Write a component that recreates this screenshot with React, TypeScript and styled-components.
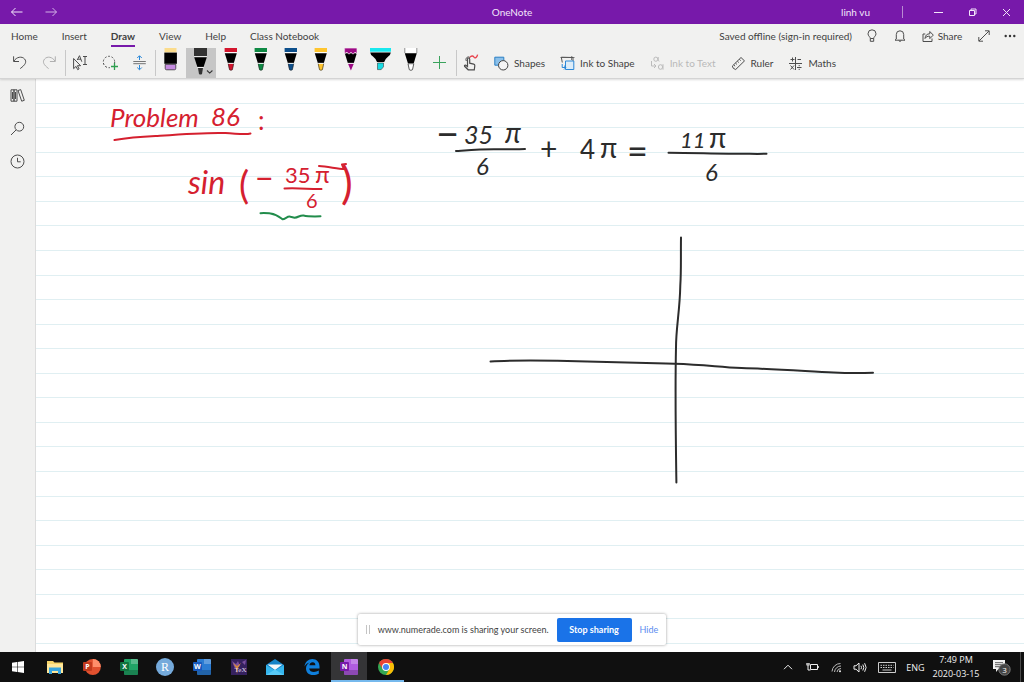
import React from "react";
import styled, { createGlobalStyle } from "styled-components";

const GlobalStyle = createGlobalStyle`
  * { box-sizing: border-box; }
  body { margin: 0; font-family: Lato, "Open Sans", sans-serif; font-size: 10px; color: #3f3f3f; }
  button { font: inherit; color: inherit; background: none; border: 0; padding: 0; margin: 0; cursor: pointer; }
  svg { display: block; flex: none; }
`;

const Window = styled.div`
  position: relative;
  display: flex;
  flex-direction: column;
  min-height: 100vh;
  background: #fff;
`;

const TitleBar = styled.header`
  display: grid;
  grid-template-columns: 1fr auto 1fr;
  align-items: center;
  height: 24px;
  background: #7719aa;
  color: #f3e6fa;
`;

const TitleGroup = styled.div<{ $end?: boolean }>`
  display: flex;
  align-items: center;
  justify-content: ${(p) => (p.$end ? "flex-end" : "flex-start")};
  height: 24px;
  padding-right: 1px;
`;

const TitleButton = styled.button<{ $dim?: boolean }>`
  display: flex;
  align-items: center;
  justify-content: center;
  width: 34px;
  height: 24px;
  opacity: ${(p) => (p.$dim ? 0.75 : 1)};
`;

const AppName = styled.h1`
  margin: 0;
  font-size: 10px;
  font-weight: 400;
`;

const UserButton = styled.button`
  height: 24px;
  padding-right: 32px;
`;

const TitleRule = styled.span`
  width: 1px;
  height: 12px;
  margin-right: 18px;
  background: #b98ad2;
`;

const Ribbon = styled.div`
  position: relative;
  z-index: 1;
  background: #f1f1f0;
  border-bottom: 1px solid #d4d4d4;
  box-shadow: 0 1px 2px rgba(0, 0, 0, 0.14);
`;

const TabRow = styled.div`
  display: flex;
  justify-content: space-between;
  height: 24px;
`;

const Tabs = styled.nav`
  display: flex;
  gap: 24px;
  padding-left: 11px;
`;

const Tab = styled.button<{ $active?: boolean }>`
  height: 23px;
  padding-top: 2px;
  border-bottom: 2px solid ${(p) => (p.$active ? "#7719aa" : "transparent")};
  font-weight: ${(p) => (p.$active ? 700 : 400)};
  white-space: nowrap;
`;

const Status = styled.div`
  display: flex;
  align-items: center;
  white-space: nowrap;
`;

const StatusButton = styled.button<{ $w: number }>`
  display: flex;
  align-items: center;
  justify-content: center;
  gap: 4px;
  width: ${(p) => p.$w}px;
  height: 24px;
`;

const StatusText = styled.span`
  padding-right: 4px;
`;

const Toolbar = styled.div`
  display: flex;
  align-items: center;
  height: 30px;
  padding-left: 5px;
`;

const Tool = styled.button<{ $on?: boolean }>`
  width: 30px;
  height: 30px;
  background: ${(p) => (p.$on ? "#c6c6c6" : "none")};
`;

const ToolDivider = styled.span<{ $overlap?: boolean }>`
  width: 1px;
  height: 26px;
  margin-right: ${(p) => (p.$overlap ? "-1px" : "0")};
  background: #c8c8c8;
`;

const LabelTool = styled.button`
  display: flex;
  align-items: center;
  gap: 5px;
  height: 30px;
  padding: 0 7px 0 8px;
  white-space: nowrap;
  &:disabled { color: #b9b9b9; }
`;

const Body = styled.div`
  display: flex;
  flex: 1;
`;

const Rail = styled.aside`
  display: flex;
  flex-direction: column;
  width: 36px;
  background: #f1f1f0;
  border-right: 1px solid #dcdcdc;
`;

const RailButton = styled.button`
  display: flex;
  align-items: center;
  justify-content: center;
  width: 35px;
  height: 33px;
`;

const Canvas = styled.main`
  position: relative;
  flex: 1;
  display: flex;
  overflow: hidden;
`;

const Ruling = styled.div`
  flex: 1;
  display: grid;
  grid-template-rows: repeat(23, 1fr);
  margin-bottom: 8px;
`;

const RuledLine = styled.span`
  border-bottom: 1px solid #e0eff2;
`;

const Ink = styled.svg`
  position: absolute;
  left: 0;
  top: 0;
  font-family: Lato, "Open Sans", sans-serif;
`;

const SharePopup = styled.section`
  position: absolute;
  left: 0;
  right: 0;
  bottom: 37px;
  z-index: 2;
  display: flex;
  align-items: center;
  width: fit-content;
  height: 31px;
  margin: 0 auto;
  padding: 0 8px;
  background: #fff;
  border-radius: 2px;
  box-shadow: 0 0 3px rgba(0, 0, 0, 0.4);
  font-size: 9px;
  white-space: nowrap;
`;

const Grip = styled.span`
  width: 4px;
  height: 9px;
  margin-right: 8px;
  border: solid #c4c4c4;
  border-width: 0 1px;
`;

const StopButton = styled.button`
  width: 75px;
  height: 24px;
  margin: 0 8px;
  border-radius: 2px;
  background: #1a73e8;
  color: #fff;
  font-weight: 700;
`;

const HideButton = styled.button`
  color: #5b8def;
`;

const Taskbar = styled.footer`
  display: flex;
  justify-content: space-between;
  height: 30px;
  background: #101010;
  color: #f0f0f0;
  font-family: "Open Sans", sans-serif;
  font-size: 9px;
`;

const Apps = styled.div`
  display: grid;
  grid-template-columns: repeat(11, 1fr);
  width: 404px;
`;

const AppButton = styled.button<{ $active?: boolean; $open?: boolean }>`
  display: flex;
  align-items: center;
  justify-content: center;
  height: 30px;
  padding-top: 2px;
  background: ${(p) => (p.$active ? "#353537" : "none")};
  border-bottom: 2px solid ${(p) => (p.$active || p.$open ? "#76b9ed" : "transparent")};
`;

const Tray = styled.div`
  display: flex;
  align-items: center;
`;

const TrayButton = styled.button<{ $w: number }>`
  display: flex;
  align-items: center;
  justify-content: center;
  width: ${(p) => p.$w}px;
  height: 30px;
`;

const Clock = styled.time`
  width: 54px;
  line-height: 14px;
  text-align: center;
`;

const DesktopEdge = styled.span`
  width: 4px;
  height: 30px;
  border-left: 1px solid #4a4a4a;
`;

type PenProps = { color: string; kind?: "pen" | "pencil" | "fine" };

const Pen = ({ color, kind = "pen" }: PenProps) => (
  <svg width="30" height="30" viewBox="0 0 30 30">
    <path d="M8.6 0H21v4.2H8.6z" fill={color} />
    <path d="M8.6 4.6h12.4" stroke="#fff" />
    <path d="M8.8 5.2h12L17.8 15h-6z" fill="#000" />
    {kind === "pencil" && (
      <path d="M8.6 0H21v5.6l-2-1.4-2 2-2-2-2 2-2-2-2.4 1.4z" fill={color} stroke="#f6e8f4" strokeWidth=".7" />
    )}
    <path
      d={kind === "pencil" ? "M12 15.7h5.8l-2.9 6.8z" : "M12 15.7h5.8l-1.3 6q-1.6 1.3-3.2 0z"}
      fill={color}
      stroke={kind === "fine" ? "#333" : "none"}
      strokeWidth=".8"
    />
    {kind !== "fine" && <path d="M12 15.3h5.8" stroke="#fff" strokeWidth=".7" />}
    {kind === "fine" && <path d="M8.8 0v5M20.8 0v5" stroke="#444" strokeWidth=".6" />}
    {kind === "pen" && <path d="M12.2 15.700l1.300 6q1.400 1.200 2.900 0l1.300-6" fill="none" stroke="#222" strokeWidth=".6" />}
  </svg>
);

const Eraser = () => (
  <svg width="30" height="30" viewBox="0 0 30 30">
    <path d="M8.500 0h12v4.400h-12z" fill="#fbdc8c" />
    <path d="M8.300 4.600h12.600v11.200H8.300z" fill="#000" />
    <path d="M9.200 16.400h10.600v4q0 1.400-1.400 1.400h-7.800q-1.400 0-1.400-1.400z" fill="#c58be0" stroke="#222" strokeWidth=".7" />
  </svg>
);

const SelectedPen = () => (
  <svg width="30" height="30" viewBox="0 0 30 30">
    <path d="M8 0h13v8.200H8z" fill="#333" />
    <path d="M8 8.600h13" stroke="#fff" strokeWidth=".8" />
    <path d="M8.200 9.200h12.600L17.600 19h-6.200z" fill="#000" />
    <path d="M11.400 19.400h6.200" stroke="#fff" strokeWidth=".8" />
    <path d="M12 20h5l-1 6q-1.500 1.200-3 0z" fill="#333" />
    <path d="M21 22.500l2.700 2.600 2.700-2.600" fill="none" stroke="#333" strokeWidth="1.100" />
  </svg>
);

const Highlighter = () => (
  <svg width="30" height="30" viewBox="0 0 30 30">
    <path d="M4 0h21v3.700H4z" fill="#19e8ee" />
    <path d="M4.200 4.400h20.600q-.3 2.600-2.600 4.200-3.300 2.700-4 5.400h-7.200q-.8-2.900-4-5.400-2.400-1.600-2.800-4.200z" fill="#000" />
    <path d="M11.500 15h6v3.800l-2.300 2.800h-3.700z" fill="#19dce4" stroke="#222" strokeWidth=".5" />
  </svg>
);

const line = { fill: "none", stroke: "#4d4d4d", strokeWidth: 1 } as const;

const Undo = ({ redo = false }: { redo?: boolean }) => (
  <svg width="30" height="30" viewBox="0 0 30 30">
    <path
      d={redo ? "M20.300 8.300v5.200h-5.400M20 13.200c-2.500-4.400-7.700-5.300-10.400-2.200-2.400 2.900-1 5.800 4 9.600" : "M8.600 8.300v5.200h5.400M8.900 13.200c2.500-4.400 8-5.300 10.700-2.200 2.400 2.900.8 5.800-4.400 9.600"}
      {...line}
      stroke={redo ? "#b0b0b0" : "#4d4d4d"}
    />
  </svg>
);

const TextSelect = () => (
  <svg width="30" height="30" viewBox="0 0 30 30" {...line}>
    <path d="M8.600 10.500v10.200l2.400-2.300 1.700 3.300 1.400-.8-1.700-3.200h3.200z" />
    <path d="M12.200 12l2.300-4.300 2.300 6M13 11.200h3M18 8.500h4M18 16.500h4M20 8.500v8" />
  </svg>
);

const Lasso = () => (
  <svg width="30" height="30" viewBox="0 0 30 30" {...line}>
    <circle cx="14" cy="14" r="5.700" strokeDasharray="2 1.600" />
    <path d="M15 15h8v8h-8z" fill="#f1f1f0" stroke="none" />
    <path d="M19.500 15v7M16 18.500h7" stroke="#2f9e4f" strokeWidth="1.300" />
  </svg>
);

const InsertSpace = () => (
  <svg width="30" height="30" viewBox="0 0 30 30" fill="none">
    <path d="M8.300 13.500h12.500M8.300 15.700h12.500" stroke="#666" strokeWidth=".9" />
    <path d="M14.500 12V8M12.200 10l2.300-2.300L16.800 10M14.500 17v4.500M12.200 19.500l2.300 2.300 2.300-2.300" stroke="#2b88d8" />
  </svg>
);

const Plus = () => (
  <svg width="30" height="30" viewBox="0 0 30 30">
    <path d="M13.500 8v13M7 14.500h13" stroke="#3aa35c" strokeWidth="1" />
  </svg>
);

const TouchDraw = () => (
  <svg width="30" height="30" viewBox="0 0 30 30" {...line}>
    <path d="M11.500 18.500v-7.300q0-1.200 1.100-1.200t1.100 1.200v4l4 .9q1.200.3 1.100 1.600l-.5 4.100h-6.100L8.600 18.300q-.5-1.200.9-1.300z" strokeWidth="1.200" />
    <path d="M10.300 13c-1.500-3 2-5.500 3.700-3.200" />
    <path d="M13.800 9.500c1.700-2.500 3.700-1.400 4.300-.2s2.900.5 3.500-2.600" stroke="#e8414b" strokeWidth="1.300" />
  </svg>
);

const ShapesIcon = () => (
  <svg width="15" height="15" viewBox="0 0 15 15">
    <path d="M.8 1.200h9v8h-9z" fill="#8bc0ea" stroke="#2b7fc4" />
    <circle cx="9.200" cy="9.300" r="4.700" fill="#f5f5f5" stroke="#444" />
  </svg>
);

const InkShapeIcon = () => (
  <svg width="15" height="15" viewBox="0 0 15 15" fill="none">
    <path d="M13 5V1.500L1.300 1.200l1 5.300" stroke="#555" />
    <path d="M.5 1.500h14M11.800 0l-.3 4" stroke="#555" strokeWidth=".8" />
    <path d="M5.500 5h8.300v8.500H5.500z" fill="#dcecf8" stroke="#2b88d8" />
    <path d="M2.200 8v3.500h3.500M4 9.700l2 1.800-2 2" stroke="#2b88d8" />
  </svg>
);

const InkTextLogo = () => (
  <svg width="15" height="15" viewBox="0 0 15 15" fill="none" stroke="#bcbcbc">
    <ellipse cx="5.800" cy="3.200" rx="2" ry="2.100" />
    <path d="M8.200 1v3.500l1.200.7M1.500 5v5h4.500M4 8l2 2-2 2" />
    <ellipse cx="10.500" cy="11" rx="2.100" ry="2.300" />
    <path d="M13 8.200v5.500" />
  </svg>
);

const RulerIcon = () => (
  <svg width="15" height="15" viewBox="0 0 15 15" {...line}>
    <path d="M10 1.500l3.500 3.400-8.800 8.600q-3-.6-3.400-3.400z" />
    <path d="M8.300 3.300l1.400 1.300M6.400 5.200l1.400 1.300M4.500 7.100l1.400 1.300M2.800 9l1.300 1.200" />
  </svg>
);

const MathsIcon = () => (
  <svg width="15" height="15" viewBox="0 0 15 15" {...line}>
    <path d="M7.500 1v13M1 7.500h13M2.500 3.500h4M4.500 1.500v4M9.500 3.500h3.500M2.500 9.500l3.500 4M6 9.500l-3.500 4M9 11.500h4.500M11.200 9v1.200M11.200 12.800V14" />
  </svg>
);

const BulbIcon = () => (
  <svg width="12" height="14" viewBox="0 0 12 14" {...line}>
    <path d="M4.300 9.500C4.300 7.800 2 7 2 4.800a4 4 0 018 0c0 2.200-2.300 3-2.300 4.700zM4.300 9.500v2.800h3.400V9.500" />
  </svg>
);

const BellIcon = () => (
  <svg width="12" height="14" viewBox="0 0 12 14" {...line}>
    <path d="M2.300 10V5.500a3.700 3.700 0 017.400 0V10l1.300 1.200H1zM4.700 11.500q1.300 2 2.600 0" />
  </svg>
);

const ShareIcon = () => (
  <svg width="12" height="14" viewBox="0 0 12 14" {...line}>
    <path d="M3.300 5H1v7.500h9V9.500M3 9.500c.3-3.300 2-4.700 4.800-4.700V2.500l3.500 3.600-3.500 3.500V7.200C5.500 7.100 4 7.800 3 9.500z" />
  </svg>
);

const ExpandIcon = () => (
  <svg width="12" height="12" viewBox="0 0 12 12" {...line}>
    <path d="M1 11L11 1M7 .8h4.200V5M.8 7v4.200H5" />
  </svg>
);

const DotsIcon = () => (
  <svg width="12" height="4" viewBox="0 0 12 4" fill="#333">
    <circle cx="1.700" cy="2" r="1.200" /><circle cx="6" cy="2" r="1.200" /><circle cx="10.300" cy="2" r="1.200" />
  </svg>
);

const Arrow = ({ right = false }: { right?: boolean }) => (
  <svg width="12" height="10" viewBox="0 0 12 10" fill="none" stroke="#f3e6fa">
    <path d={right ? "M.5 5h11M7.500 1l4 4-4 4" : "M11.500 5H.5M4.500 1l-4 4 4 4"} />
  </svg>
);

const OfficeIcon = ({ letter, color, dark, round }: { letter: string; color: string; dark: string; round?: boolean }) => (
  <svg width="18" height="18" viewBox="0 0 18 18">
    {round ? (
      <>
        <circle cx="9.800" cy="9" r="8" fill={color} />
        <path d="M9.800 1a8 8 0 018 8h-8z" fill="#ff8f6b" />
      </>
    ) : (
      <>
        <rect x="4" y="1" width="14" height="16" rx="1" fill={color} />
        <path d="M11 1h6q1 0 1 1v4h-7z" fill="#fff" opacity=".25" />
        <path d="M4 12h14v4q0 1-1 1H5q-1 0-1-1z" fill="#000" opacity=".2" />
      </>
    )}
    <rect x="0" y="4" width="9" height="9" rx="1" fill={dark} />
    <text x="4.500" y="11" textAnchor="middle" fontSize="7" fontWeight="700" fill="#fff">{letter}</text>
  </svg>
);

const apps: { name: string; icon: React.ReactNode; active?: boolean; open?: boolean }[] = [
  {
    name: "Start",
    icon: (
      <svg width="12" height="12" viewBox="0 0 12 12" fill="#fff">
        <path d="M0 1.700l5-.7v4.700H0zM5.600.9L12 0v5.700H5.600zM0 6.300h5V11l-5-.7zM5.600 6.300H12V12l-6.400-.9z" />
      </svg>
    ),
  },
  {
    name: "File Explorer",
    icon: (
      <svg width="16" height="14" viewBox="0 0 16 14">
        <path d="M0 1h6l1.500 1.500H16V13H0z" fill="#f6d56b" />
        <path d="M0 4h16v9H0z" fill="#ffe79a" />
        <path d="M2 14V7.500h12V14h-3v-3H5v3z" fill="#37a5df" />
      </svg>
    ),
  },
  { name: "PowerPoint", icon: <OfficeIcon letter="P" color="#e1512f" dark="#c23b1e" round /> },
  { name: "Excel", icon: <OfficeIcon letter="X" color="#21a366" dark="#10743f" /> },
  {
    name: "R",
    icon: (
      <svg width="18" height="18" viewBox="0 0 18 18">
        <circle cx="9" cy="9" r="9" fill="#75aadb" />
        <text x="9" y="13" textAnchor="middle" fontSize="12" fontFamily="Liberation Serif, serif" fill="#fff">R</text>
      </svg>
    ),
  },
  { name: "Word", icon: <OfficeIcon letter="W" color="#2b7cd3" dark="#185abd" /> },
  {
    name: "TeX",
    icon: (
      <svg width="16" height="16" viewBox="0 0 16 16">
        <rect width="16" height="16" fill="#35215e" />
        <path d="M1 2l4 3 2-3 2 5-5 3zM11 3l4-2-1 5z" fill="#7a4f9e" />
        <path d="M2 4l3 5 1 6 1-6 3-5-4 3z" fill="#d58a3f" />
        <text x="9.500" y="13" textAnchor="middle" fontSize="7" fontFamily="Liberation Serif, serif" fill="#e8dcec">TeX</text>
      </svg>
    ),
  },
  {
    name: "Mail",
    icon: (
      <svg width="18" height="16" viewBox="0 0 18 16">
        <path d="M0 6l9-6 9 6v10H0z" fill="#1583c7" />
        <path d="M1.500 5.500h15L9 11z" fill="#f4f8fa" />
        <path d="M0 6l9 5.500L18 6v10H0z" fill="#35b6ee" />
        <path d="M0 16l9-5.500L18 16z" fill="#58caf7" />
      </svg>
    ),
  },
  {
    name: "Edge",
    icon: (
      <svg width="16" height="16" viewBox="0 0 16 16">
        <path d="M.5 7.400C1.200 2.800 4.400 0 8.300 0c4.600 0 7.200 3.400 7.200 7.500v1.900H5.200c.2 2.500 2.300 3.500 4.700 3.500 1.800 0 3.400-.5 4.900-1.400v3.300C13.200 15.600 11.300 16 9.200 16 4.600 16 2 13.300 2 9.500c0-2.700 1.400-4.900 3.800-6C3.500 3.900 1.700 5.300.5 7.400zM5.400 6.300h6c0-1.900-1-3-2.700-3-1.800 0-2.900 1.100-3.300 3z" fill="#0f7fdb" />
      </svg>
    ),
  },
  { name: "OneNote", icon: <OfficeIcon letter="N" color="#b05ce0" dark="#7719aa" />, active: true },
  {
    name: "Chrome",
    icon: (
      <svg width="16" height="16" viewBox="0 0 16 16">
        <circle cx="8" cy="8" r="8" fill="#34a853" />
        <path d="M8 8L1.070 4A8 8 0 0114.930 4z" fill="#ea4335" />
        <path d="M8 4h6.930A8 8 0 018 16l3.460-6z" fill="#fbbc05" />
        <path d="M1.070 4L4.600 10 8 8V4z" fill="#ea4335" />
        <circle cx="8" cy="8" r="3.900" fill="#fff" />
        <circle cx="8" cy="8" r="3" fill="#4285f4" />
      </svg>
    ),
    open: true,
  },
];

const pens: PenProps[] = [
  { color: "#d3152d" },
  { color: "#0f8a44" },
  { color: "#0d4f8b" },
  { color: "#ffc52e" },
  { color: "#9c0a84", kind: "pencil" },
];

const InkLayer = () => (
  <Ink width="988" height="573" viewBox="36 79 988 573">
    <g fill="#d5202f">
      <text x="110" y="127" fontSize="26" fontStyle="italic">Problem</text>
      <text x="211" y="126" fontSize="26" fontStyle="italic">86</text>
      <text x="258" y="130" fontSize="26">:</text>
      <text x="188" y="194" fontSize="32" fontStyle="italic">sin</text>
      <text x="239" y="199" fontSize="38">(</text>
      <text x="255" y="190" fontSize="32">−</text>
      <text x="285" y="183" fontSize="22">35</text>
      <text x="315" y="183" fontSize="24">π</text>
      <text x="306" y="208" fontSize="20">6</text>
      <text x="341" y="199" fontSize="44">)</text>
    </g>
    <g fill="none" stroke="#d5202f" strokeWidth="2" strokeLinecap="round" strokeLinejoin="round">
      <path d="M114.500 140c12-2 25-3.200 41-4 28-2 50-3.700 70-3 12 .6 20 2 25 .5" />
      <path d="M284.500 188.500c13-1 27 1 37 .5" />
      <path d="M319 166c9 .5 19 3 25 3l-2-4.500 4-.5" />
    </g>
    <path d="M260.500 213.200c4-.5 7 0 10 .3 6 .8 9 3.500 12 5.700 3 0 5-3.500 8-2.500l4 1c4-.2 5-2.500 9-2.200 5 1.200 11 1 17 .8" fill="none" stroke="#218c4b" strokeWidth="2" strokeLinecap="round" />
    <g fill="#2c2c2c">
      <text x="436" y="148" fontSize="40">−</text>
      <text x="464" y="144" fontSize="25" fontStyle="italic">35</text>
      <text x="505" y="143" fontSize="28" fontStyle="italic">π</text>
      <text x="476" y="175" fontSize="24" fontStyle="italic">6</text>
      <text x="540" y="160" fontSize="30">+</text>
      <text x="580" y="159" fontSize="26">4</text>
      <text x="600" y="158" fontSize="28">π</text>
      <text x="627" y="164" fontSize="36">=</text>
      <text x="680" y="148" fontSize="22" fontStyle="italic">11</text>
      <text x="709" y="148" fontSize="28">π</text>
      <text x="705" y="181" fontSize="24" fontStyle="italic">6</text>
    </g>
    <g fill="none" stroke="#2c2c2c" strokeWidth="2" strokeLinecap="round">
      <path d="M456 151c15-1 25-1.800 38-1.800 12-.2 20 .2 31-.2" />
      <path d="M668.500 152.800c28 0 46 1.200 65 .9 15-.2 22 .6 33 0" />
      <path d="M681 237.500c-.3 19 .3 33-.7 48-.5 26-4.300 42-4.300 62-1 43-.4 80 .4 135" />
      <path d="M490.500 361.500c20-1.300 43-1 67-.7 30 1 74 2 117 2.900 30 1 42 3 67 4.300 33 1 65 3.200 92 4.500 18 1 26 .8 39.500.3" />
    </g>
  </Ink>
);

const tabNames = ["Home", "Insert", "Draw", "View", "Help", "Class Notebook"];

export default function App() {
  return (
    <Window>
      <GlobalStyle />
      <TitleBar>
        <TitleGroup>
          <TitleButton aria-label="Back"><Arrow /></TitleButton>
          <TitleButton aria-label="Forward" $dim><Arrow right /></TitleButton>
        </TitleGroup>
        <AppName>OneNote</AppName>
        <TitleGroup $end>
          <UserButton>linh vu</UserButton>
          <TitleRule />
          <TitleButton aria-label="Minimize">
            <svg width="9" height="9" viewBox="0 0 9 9" stroke="#f3e6fa"><path d="M0 4.500h9" /></svg>
          </TitleButton>
          <TitleButton aria-label="Restore">
            <svg width="9" height="9" viewBox="0 0 9 9" fill="none" stroke="#f3e6fa"><path d="M1.500 2.500h5v5h-5zM3 2.500v-1.500h5V6H6.500" /></svg>
          </TitleButton>
          <TitleButton aria-label="Close">
            <svg width="9" height="9" viewBox="0 0 9 9" stroke="#f3e6fa"><path d="M1 1l7 7M8 1L1 8" /></svg>
          </TitleButton>
        </TitleGroup>
      </TitleBar>

      <Ribbon>
        <TabRow>
          <Tabs>
            {tabNames.map((name) => (
              <Tab key={name} $active={name === "Draw"}>{name}</Tab>
            ))}
          </Tabs>
          <Status>
            <StatusText>Saved offline (sign-in required)</StatusText>
            <StatusButton $w={32} aria-label="Tips"><BulbIcon /></StatusButton>
            <StatusButton $w={24} aria-label="Notifications"><BellIcon /></StatusButton>
            <StatusButton $w={60}><ShareIcon />Share</StatusButton>
            <StatusButton $w={24} aria-label="Full screen"><ExpandIcon /></StatusButton>
            <StatusButton $w={28} aria-label="More"><DotsIcon /></StatusButton>
          </Status>
        </TabRow>
        <Toolbar>
          <Tool aria-label="Undo"><Undo /></Tool>
          <Tool aria-label="Redo"><Undo redo /></Tool>
          <ToolDivider $overlap />
          <Tool aria-label="Select or type"><TextSelect /></Tool>
          <Tool aria-label="Lasso"><Lasso /></Tool>
          <Tool aria-label="Insert space"><InsertSpace /></Tool>
          <ToolDivider />
          <Tool aria-label="Eraser"><Eraser /></Tool>
          <Tool aria-label="Black pen" $on><SelectedPen /></Tool>
          {pens.map((pen) => (
            <Tool key={pen.color} aria-label="Pen"><Pen {...pen} /></Tool>
          ))}
          <Tool aria-label="Highlighter"><Highlighter /></Tool>
          <Tool aria-label="White pen"><Pen color="#fff" kind="fine" /></Tool>
          <Tool aria-label="Add pen"><Plus /></Tool>
          <ToolDivider $overlap />
          <Tool aria-label="Draw with touch"><TouchDraw /></Tool>
          <LabelTool><ShapesIcon />Shapes</LabelTool>
          <LabelTool><InkShapeIcon />Ink to Shape</LabelTool>
          <LabelTool disabled><InkTextLogo />Ink to Text</LabelTool>
          <LabelTool><RulerIcon />Ruler</LabelTool>
          <LabelTool><MathsIcon />Maths</LabelTool>
        </Toolbar>
      </Ribbon>

      <Body>
        <Rail>
          <RailButton aria-label="Notebooks">
            <svg width="15" height="13" viewBox="0 0 15 13" {...line}>
              <path d="M1 .8h3v11.400H1zM4 .8h3v11.400H4zM8 1.500l2.700-.9 3.600 10.700-2.600.9zM2.500 3v7M5.500 3v7" />
            </svg>
          </RailButton>
          <RailButton aria-label="Search">
            <svg width="15" height="15" viewBox="0 0 15 15" {...line}>
              <circle cx="9.300" cy="5.700" r="4.400" /><path d="M6.200 8.800L1 14" />
            </svg>
          </RailButton>
          <RailButton aria-label="Recent">
            <svg width="15" height="15" viewBox="0 0 15 15" {...line}>
              <circle cx="7.500" cy="7.500" r="6.500" /><path d="M7.500 3.800v4h3.200" />
            </svg>
          </RailButton>
        </Rail>
        <Canvas>
          <Ruling>
            {Array.from({ length: 23 }, (_, i) => <RuledLine key={i} />)}
          </Ruling>
          <InkLayer />
        </Canvas>
      </Body>

      <SharePopup>
        <Grip />
        <span>www.numerade.com is sharing your screen.</span>
        <StopButton>Stop sharing</StopButton>
        <HideButton>Hide</HideButton>
      </SharePopup>

      <Taskbar>
        <Apps>
          {apps.map((app) => (
            <AppButton key={app.name} aria-label={app.name} $active={app.active} $open={app.open}>{app.icon}</AppButton>
          ))}
        </Apps>
        <Tray>
          <TrayButton $w={24} aria-label="Show hidden icons">
            <svg width="10" height="6" viewBox="0 0 10 6" fill="none" stroke="#eee"><path d="M1 5.200l4-4 4 4" /></svg>
          </TrayButton>
          <TrayButton $w={24} aria-label="Battery">
            <svg width="13" height="10" viewBox="0 0 13 10" fill="none" stroke="#eee"><path d="M4.500 2.500h7v5h-7zM12.300 4v2M1 1v2.500q1 1.500 2 0V1M2 4.500V8h2.500M.5 2h3" /></svg>
          </TrayButton>
          <TrayButton $w={24} aria-label="Network">
            <svg width="11" height="11" viewBox="0 0 11 11" fill="none" stroke="#bbb"><path d="M1 9.500A8.500 8.500 0 019.500 1.500M3.500 10A6.500 6.500 0 0110 4M6 10a4 4 0 014-3.500" /><circle cx="9" cy="9.300" r="1" fill="#eee" stroke="none" /></svg>
          </TrayButton>
          <TrayButton $w={24} aria-label="Volume">
            <svg width="14" height="11" viewBox="0 0 14 11" fill="none" stroke="#eee"><path d="M1 3.800h2L6 1v9L3 7.200H1zM8 3.800q1 1.700 0 3.400M9.800 2.500q2 3 0 6M11.600 1.200q3 4.300 0 8.600" /></svg>
          </TrayButton>
          <TrayButton $w={30} aria-label="Touch keyboard">
            <svg width="18" height="11" viewBox="0 0 18 11" fill="none" stroke="#ccc"><path d="M.5.5h17v10H.5z" /><path d="M2.500 3.300h13M2.500 5.500h13" strokeDasharray="1.500 1" /><path d="M4.500 8h9" /></svg>
          </TrayButton>
          <TrayButton $w={27}>ENG</TrayButton>
          <Clock>7:49 PM<br />2020-03-15</Clock>
          <TrayButton $w={37} aria-label="3 notifications">
            <svg width="19" height="17" viewBox="0 0 19 17">
              <path d="M1 1h12v9H6.500L4 13v-3H1z" fill="#f2f2f2" />
              <path d="M3 3.700h8M3 5.700h8M3 7.700h5" stroke="#333" strokeWidth=".8" />
              <circle cx="12.500" cy="10.500" r="5.700" fill="#444" stroke="#8a8a8a" strokeWidth=".8" />
              <text x="12.500" y="13.500" textAnchor="middle" fontSize="8" fill="#fff">3</text>
            </svg>
          </TrayButton>
          <DesktopEdge />
        </Tray>
      </Taskbar>
    </Window>
  );
}
